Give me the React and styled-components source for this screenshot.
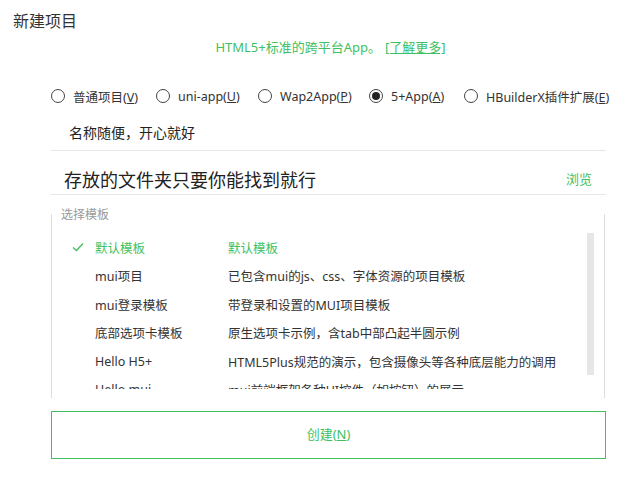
import React from "react";
import styled, { createGlobalStyle } from "styled-components";

const GREEN = "#3fbf5f";

const Global = createGlobalStyle`
  html, body { margin: 0; padding: 0; background: #fff; }
  body { font-family: "Noto Sans", "Noto Sans CJK SC", sans-serif; color: #333; }
  * { box-sizing: border-box; }
`;

const Page = styled.div`
  width: 641px;
  height: 484px;
  position: relative;
  overflow: hidden;
  background: #fff;
`;

const Title = styled.div`
  font-size: 16px;
  line-height: 22px;
  padding: 10px 0 0 13px;
  color: #333;
`;

const Subtitle = styled.div`
  font-size: 13px;
  line-height: 18px;
  text-align: center;
  color: ${GREEN};
  margin-top: 6px;
  padding-left: 20px;
  a { color: ${GREEN}; text-decoration: underline; margin-left: 4px; }
`;

const RadioRow = styled.div`
  display: flex;
  align-items: center;
  padding-left: 51px;
  margin-top: 29px;
  height: 22px;
`;

const RadioItem = styled.label`
  display: flex;
  align-items: center;
  font-size: 12.5px;
  color: #333;
  width: ${(p) => (p.$w ? `${p.$w}px` : "auto")};
  white-space: nowrap;
  u { text-decoration: underline; }
`;

const Circle = styled.span`
  flex: none;
  width: 14px;
  height: 14px;
  border-radius: 50%;
  border: 1px solid #444;
  margin-right: 8px;
  display: flex;
  align-items: center;
  justify-content: center;
  &::after {
    content: "";
    width: 8px;
    height: 8px;
    border-radius: 50%;
    background: #222;
    display: ${(p) => (p.$checked ? "block" : "none")};
  }
`;

const Form = styled.div`
  margin: 7px 35px 0 51px;
`;

const InputRow = styled.div`
  display: flex;
  align-items: center;
  justify-content: space-between;
  border-bottom: 1px solid #e6e6e6;
  height: ${(p) => p.$h}px;
  padding-top: ${(p) => p.$pt || 0}px;
  padding-left: ${(p) => p.$pl}px;
  padding-right: 14px;
  font-size: ${(p) => p.$fs}px;
  color: #222;
`;

const Browse = styled.span`
  font-size: 13px;
  color: ${GREEN};
`;

const Fieldset = styled.div`
  margin: 19px 36px 0 51px;
  height: 184px;
  border-left: 1px solid #ddd;
  border-right: 1px solid #ddd;
  position: relative;
`;

const Legend = styled.div`
  font-size: 12px;
  color: #999;
  padding-left: 9px;
  line-height: 14px;
  position: relative;
  top: -6px;
`;

const List = styled.div`
  margin-top: 5px;
  height: 156px;
  overflow: hidden;
`;

const Row = styled.div`
  display: grid;
  grid-template-columns: 43px 133px 1fr;
  align-items: center;
  height: 28.5px;
  font-size: 12.5px;
  color: ${(p) => (p.$active ? GREEN : "#333")};
  white-space: nowrap;
`;

const Check = styled.span`
  justify-self: end;
  padding-right: 11px;
  display: flex;
`;

const Thumb = styled.div`
  position: absolute;
  right: 10px;
  top: 19px;
  width: 7px;
  height: 142px;
  background: #e6e6e6;
`;

const CreateButton = styled.button`
  display: block;
  margin: 13px 36px 0 51px;
  width: 555px;
  height: 48px;
  padding-bottom: 4px;
  border: 1px solid ${GREEN};
  background: #fff;
  color: ${GREEN};
  font-family: inherit;
  font-size: 13px;
  u { text-decoration: underline; }
`;

const radios = [
  { label: "普通项目(", key: "V", w: 105 },
  { label: "uni-app(", key: "U", w: 102 },
  { label: "Wap2App(", key: "P", w: 111 },
  { label: "5+App(", key: "A", w: 95, checked: true },
  { label: "HBuilderX插件扩展(", key: "E" },
];

const templates = [
  ["默认模板", "默认模板", true],
  ["mui项目", "已包含mui的js、css、字体资源的项目模板"],
  ["mui登录模板", "带登录和设置的MUI项目模板"],
  ["底部选项卡模板", "原生选项卡示例，含tab中部凸起半圆示例"],
  ["Hello H5+", "HTML5Plus规范的演示，包含摄像头等各种底层能力的调用"],
  ["Hello mui", "mui前端框架各种UI控件（如按钮）的展示"],
];

export default function App() {
  return (
    <Page>
      <Global />
      <Title>新建项目</Title>
      <Subtitle>
        HTML5+标准的跨平台App。<a>[了解更多]</a>
      </Subtitle>
      <RadioRow>
        {radios.map((r) => (
          <RadioItem key={r.key} $w={r.w}>
            <Circle $checked={r.checked} />
            <span>
              {r.label}
              <u>{r.key}</u>)
            </span>
          </RadioItem>
        ))}
      </RadioRow>
      <Form>
        <InputRow $h={37} $pl={18} $fs={14}>
          名称随便，开心就好
        </InputRow>
        <InputRow $h={44} $pt={12} $pl={13} $fs={18}>
          <span>存放的文件夹只要你能找到就行</span>
          <Browse>浏览</Browse>
        </InputRow>
      </Form>
      <Fieldset>
        <Legend>选择模板</Legend>
        <List>
          {templates.map(([n, d, a]) => (
            <Row key={n} $active={a}>
              <Check>
                {a && (
                  <svg width="12" height="10" viewBox="0 0 12 10">
                    <path d="M1 5.5 L4.5 8.5 L11 1.5" fill="none" stroke={GREEN} strokeWidth="1.3" />
                  </svg>
                )}
              </Check>
              <span>{n}</span>
              <span>{d}</span>
            </Row>
          ))}
        </List>
        <Thumb />
      </Fieldset>
      <CreateButton>
        创建(<u>N</u>)
      </CreateButton>
    </Page>
  );
}
